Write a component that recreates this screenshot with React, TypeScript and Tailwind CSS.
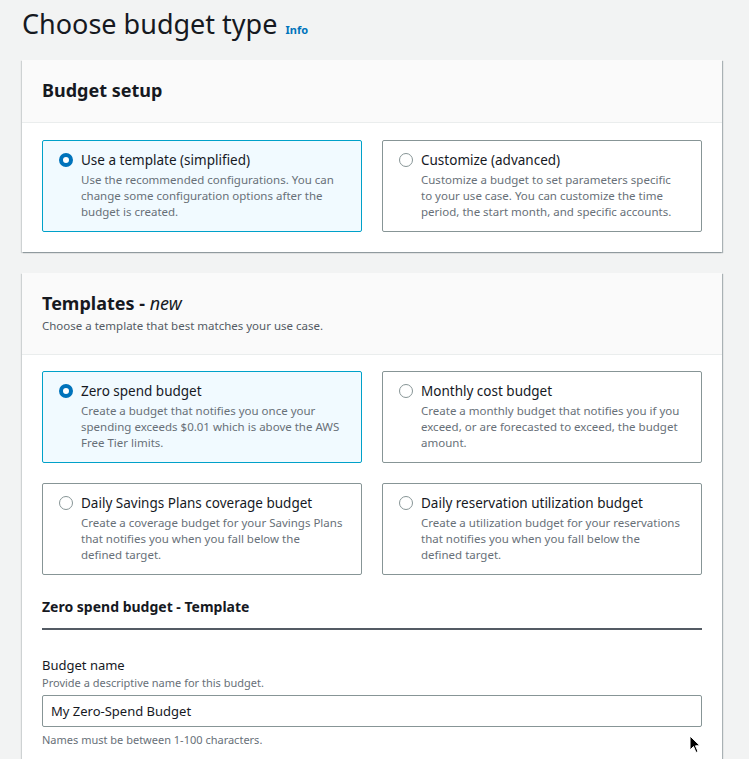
import * as React from "react";

type Option = { title: string; desc: string; selected?: boolean };

const setupOptions: Option[] = [
  {
    title: "Use a template (simplified)",
    desc: "Use the recommended configurations. You can change some configuration options after the budget is created.",
    selected: true,
  },
  {
    title: "Customize (advanced)",
    desc: "Customize a budget to set parameters specific to your use case. You can customize the time period, the start month, and specific accounts.",
  },
];

const templateOptions: Option[] = [
  {
    title: "Zero spend budget",
    desc: "Create a budget that notifies you once your spending exceeds $0.01 which is above the AWS Free Tier limits.",
    selected: true,
  },
  {
    title: "Monthly cost budget",
    desc: "Create a monthly budget that notifies you if you exceed, or are forecasted to exceed, the budget amount.",
  },
  {
    title: "Daily Savings Plans coverage budget",
    desc: "Create a coverage budget for your Savings Plans that notifies you when you fall below the defined target.",
  },
  {
    title: "Daily reservation utilization budget",
    desc: "Create a utilization budget for your reservations that notifies you when you fall below the defined target.",
  },
];

function Radio({ checked }: { checked?: boolean }) {
  return checked ? (
    <span className="mt-[3px] h-[14px] w-[14px] shrink-0 rounded-full border-[4px] border-[#0073bb] bg-white" />
  ) : (
    <span className="mt-[3px] h-[14px] w-[14px] shrink-0 rounded-full border border-[#879596] bg-white" />
  );
}

function Tile({ option }: { option: Option }) {
  return (
    <div
      className={
        option.selected
          ? "flex h-[92px] gap-[8px] rounded-[2px] border border-[#00a1c9] bg-[#f1faff] pt-[9px] pl-[16px]"
          : "flex h-[92px] gap-[8px] rounded-[2px] border border-[#879596] bg-white pt-[9px] pl-[16px]"
      }
    >
      <Radio checked={option.selected} />
      <div className="w-[262.5px]">
        <div className="text-[13.5px] leading-[20px] text-[#16191f]">{option.title}</div>
        <div className="mt-[2px] text-[11.5px] leading-[16px] text-[#687078]">{option.desc}</div>
      </div>
    </div>
  );
}

export default function App() {
  return (
    <div
      className="min-h-[759px] overflow-hidden bg-[#f2f3f3] px-[22px] text-[#16191f]"
      style={{ fontFamily: '"Noto Sans", "Open Sans", sans-serif' }}
    >
      <div className="flex items-baseline gap-[8px] pt-[4px] pb-[16px]">
        <h1 className="text-[27px] leading-[40px] font-normal">Choose budget type</h1>
        <a className="text-[11px] font-bold text-[#0073bb]">Info</a>
      </div>

      {/* Budget setup */}
      <div className="mb-[21px] w-[700px] bg-white shadow-[1px_1px_1px_0_rgba(0,28,36,0.3),-1px_1px_1px_0_rgba(0,28,36,0.15)]">
        <div className="flex h-[63px] items-center border-b border-[#eaeded] bg-[#fafafa] px-[20px] pb-[2px]">
          <h2 className="text-[18px] font-bold">Budget setup</h2>
        </div>
        <div className="grid grid-cols-2 gap-[20px] px-[20px] pt-[17px] pb-[20px]">
          {setupOptions.map((o) => (
            <Tile key={o.title} option={o} />
          ))}
        </div>
      </div>

      {/* Templates */}
      <div className="w-[700px] bg-white pb-[40px] shadow-[1px_1px_1px_0_rgba(0,28,36,0.3),-1px_1px_1px_0_rgba(0,28,36,0.15)]">
        <div className="h-[82px] border-b border-[#eaeded] bg-[#fafafa] px-[20px] pt-[17px]">
          <h2 className="text-[18px] leading-[26px] font-bold">
            Templates - <i className="font-normal">new</i>
          </h2>
          <p className="mt-[2px] text-[11.5px] leading-[16px] text-[#545b64]">
            Choose a template that best matches your use case.
          </p>
        </div>
        <div className="grid grid-cols-2 gap-x-[20px] gap-y-[20px] px-[20px] pt-[16px]">
          {templateOptions.map((o) => (
            <Tile key={o.title} option={o} />
          ))}
        </div>

        <div className="px-[20px] pt-[20px]">
          <h3 className="border-b-2 border-[#545b64] pb-[9px] text-[14px] leading-[24px] font-bold">
            Zero spend budget - Template
          </h3>
          <div className="pt-[25px]">
            <label className="block text-[13px] leading-[20px]">Budget name</label>
            <p className="text-[11px] leading-[16px] text-[#687078]">
              Provide a descriptive name for this budget.
            </p>
            <input
              className="mt-[4px] block h-[32px] w-full rounded-[2px] border border-[#879596] px-[8px] text-[13px] outline-none"
              defaultValue="My Zero-Spend Budget"
            />
            <p className="mt-[5px] text-[11px] leading-[16px] text-[#687078]">
              Names must be between 1-100 characters.
            </p>
          </div>
        </div>
      </div>

      {/* mouse pointer */}
      <svg className="pointer-events-none absolute top-[735px] left-[689px]" width="12" height="19" viewBox="0 0 12 19">
        <path d="M1 1 L1 15 L4.5 11.5 L7 17.5 L9 16.5 L6.5 10.8 L11 10.8 Z" fill="#000" stroke="#fff" strokeWidth="1" />
      </svg>
    </div>
  );
}
